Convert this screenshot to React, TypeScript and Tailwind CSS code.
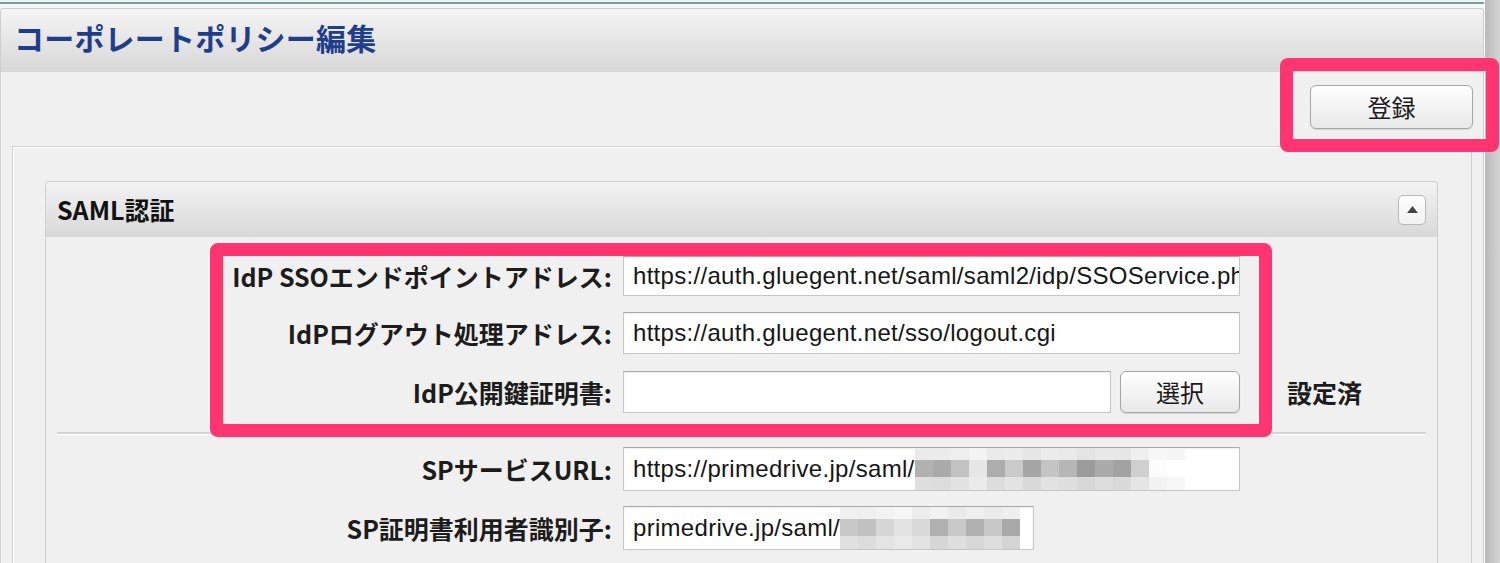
import React from 'react';

// pixelated blur used to hide part of the URLs
const mosaicUrl = {
  top: ['#ebebeb', '#ececec', '#eeeeee', '#f3f3f3', '#eaeaea', '#ececec', '#e6e6e6', '#ebebeb', '#e9e9e9', '#e4e4e4', '#e8e8e8', '#e7e7e7', '#efefef', '#f6f6f6', '#f5f5f5'],
  mid: ['#b1b1b1', '#aaaaaa', '#c2c2c2', '#e6e6e6', '#adadad', '#cacaca', '#a5a5a5', '#c4c4c4', '#b6b6b6', '#9c9c9c', '#ababab', '#a2a2a2', '#cfcfcf', '#fcfcfc', '#ffffff'],
  bot: ['#dedede', '#dcdcdc', '#e2e2e2', '#ebebeb', '#dddddd', '#e3e3e3', '#d9d9d9', '#e1e1e1', '#dedede', '#d8d8d8', '#dcdcdc', '#d9d9d9', '#e5e5e5', '#f2f2f2', '#f7f7f7'],
};

const mosaicId = {
  top: ['#f0f0f0', '#efefef', '#f3f3f3', '#f6f6f6', '#ececec', '#f1f1f1', '#eaeaea', '#efefef', '#ebebeb', '#eeeeee'],
  mid: ['#c7c7c7', '#c1c1c1', '#d6d6d6', '#e3e3e3', '#d9d9d9', '#b0b0b0', '#c9c9c9', '#b1b1b1', '#c8c8c8', '#a9a9a9'],
  bot: ['#e0e0e0', '#dcdcdc', '#e4e4e4', '#e9e9e9', '#e3e3e3', '#d6d6d6', '#dfdfdf', '#d7d7d7', '#dedede', '#d4d4d4'],
};

const Mosaic = ({ data, cell }: { data: { top: string[]; mid: string[]; bot: string[] }; cell: number }) => {
  const w = data.mid.length * cell;
  return (
    <svg width={w} height={44} viewBox={`0 0 ${w} 44`} className="shrink-0">
      {data.top.map((c, i) => (
        <rect key={'t' + i} x={i * cell} y={0} width={cell} height={13} fill={c} />
      ))}
      {data.mid.map((c, i) => (
        <rect key={'m' + i} x={i * cell} y={13} width={cell} height={17} fill={c} />
      ))}
      {data.bot.map((c, i) => (
        <rect key={'b' + i} x={i * cell} y={30} width={cell} height={14} fill={c} />
      ))}
    </svg>
  );
};

const Row = ({ label, className, children }: { label: string; className: string; children: React.ReactNode }) => (
  <div className={`flex items-center h-[42px] ${className}`}>
    <div className="w-[566px] shrink-0 text-right text-[25px] font-bold text-[#1c1c1c] whitespace-nowrap leading-none">
      {label}
    </div>
    <div className="ml-[11px] flex items-center h-full">{children}</div>
  </div>
);

const Field = ({ width, children }: { width: string; children?: React.ReactNode }) => (
  <div
    className={`${width} h-full flex items-center overflow-hidden whitespace-nowrap bg-white border border-[#c6c6c6] border-t-[#a9a9a9] shadow-[inset_0_1px_2px_rgba(0,0,0,0.08)] pl-[9px] text-[24px] tracking-[0.3px] text-[#161616] font-['Liberation_Sans',sans-serif]`}
  >
    {children}
  </div>
);

const Button = ({ label, className }: { label: string; className: string }) => (
  <button
    className={`${className} flex items-center justify-center rounded-[6px] border border-[#a6a6a6] bg-linear-to-b from-white to-[#e8e8e8] shadow-[0_1px_1px_rgba(0,0,0,0.12)] text-[24px] text-[#1a1a1a] leading-none`}
  >
    {label}
  </button>
);

export default function App() {
  return (
    <div className="relative w-[1500px] h-[563px] overflow-hidden bg-[#f6f6f6] font-['Noto_Sans_CJK_JP',sans-serif]">
      <div className="flex h-full">
        <div className="w-[1484px] flex flex-col">
          <div className="h-[2px] bg-[#f2f2f2]" />
          <div className="h-[2px] bg-[#6fa39b]" />
          <div className="h-[4px] bg-[#f7f7f7]" />

          {/* outer panel */}
          <div className="flex-1 flex flex-col border border-b-0 border-[#cdcdcd] rounded-t-[4px] bg-[#f0f0f0] shadow-[inset_1px_1px_0_#ffffff]">
            <div className="h-[63px] flex items-center pl-[13px] pb-[6px] rounded-t-[4px] bg-linear-to-b from-[#f4f4f4] to-[#d8d8d8] border-b border-[#d4d4d4]">
              <h1 className="text-[30px] font-bold text-[#1f3d8d] leading-none tracking-[0.2px]">コーポレートポリシー編集</h1>
            </div>

            <div className="flex justify-end pt-[13px] pr-[10px]">
              <Button label="登録" className="w-[163px] h-[44px]" />
            </div>

            {/* inner container */}
            <div className="flex-1 mt-[17px] ml-[11px] mr-[11px] border border-b-0 border-[#d0d0d0] shadow-[inset_1px_1px_0_#ffffff] pt-[34px] pl-[32px] pr-[33px]">
              {/* SAML panel */}
              <div className="h-full border border-b-0 border-[#d0d0d0] rounded-t-[4px] bg-[#f0f0f0]">
                <div className="h-[55px] flex items-center justify-between pl-[11px] pr-[11px] rounded-t-[4px] bg-linear-to-b from-[#f3f3f3] to-[#d8d8d8]">
                  <span className="text-[25px] font-bold text-[#111] leading-none">SAML認証</span>
                  <button className="w-[28px] h-[30px] flex items-center justify-center rounded-[5px] border border-[#b9b9b9] bg-linear-to-b from-white to-[#f1f1f1]">
                    <svg width="11" height="7" viewBox="0 0 11 7">
                      <path d="M5.5 0 L11 7 L0 7 Z" fill="#444" />
                    </svg>
                  </button>
                </div>

                <Row label="IdP SSOエンドポイントアドレス:" className="mt-[19px] !h-[40px]">
                  <Field width="w-[617px]">https://auth.gluegent.net/saml/saml2/idp/SSOService.php</Field>
                </Row>
                <Row label="IdPログアウト処理アドレス:" className="mt-[16px]">
                  <Field width="w-[617px]">https://auth.gluegent.net/sso/logout.cgi</Field>
                </Row>
                <Row label="IdP公開鍵証明書:" className="mt-[17px]">
                  <Field width="w-[488px]" />
                  <Button label="選択" className="ml-[9px] w-[120px] h-[42px]" />
                  <span className="ml-[47px] text-[25px] font-bold text-[#1c1c1c] leading-none">設定済</span>
                </Row>

                <div className="mt-[19px] mx-[11px] h-[2px] border-t-2 border-[#d4d4d4] border-b border-b-white" />

                <Row label="SPサービスURL:" className="mt-[12px] !h-[44px]">
                  <Field width="w-[617px]">
                    <span>https://primedrive.jp/saml/</span>
                    <Mosaic data={mosaicUrl} cell={18} />
                  </Field>
                </Row>
                <Row label="SP証明書利用者識別子:" className="mt-[15px] !h-[44px]">
                  <Field width="w-[411px]">
                    <span>primedrive.jp/saml/</span>
                    <Mosaic data={mosaicId} cell={18} />
                  </Field>
                </Row>
              </div>
            </div>
          </div>
        </div>

        {/* window edge */}
        <div className="flex-1 bg-linear-to-r from-[#b9b9b9] to-[#d3d3d3] border-l border-white" />
      </div>

      {/* annotation boxes */}
      <div className="absolute left-[1280px] top-[58px] w-[219px] h-[94px] border-[13px] border-[#ff3572] rounded-[8px]" />
      <div className="absolute left-[210px] top-[243px] w-[1062px] h-[194px] border-[13px] border-[#ff3572] rounded-[8px]" />
    </div>
  );
}
